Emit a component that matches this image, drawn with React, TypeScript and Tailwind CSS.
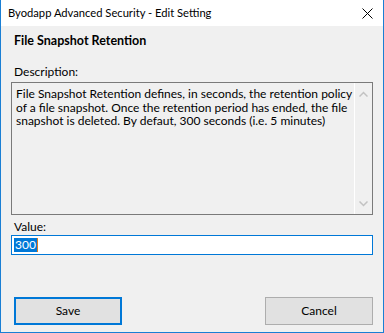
const font = { fontFamily: 'Lato, "Noto Sans", "Liberation Sans", sans-serif' };

function Chevron({ up }: { up?: boolean }) {
  return (
    <svg width="9" height="6" viewBox="0 0 9 6" className="block">
      <path
        d={up ? "M0.5 5.5 L4.5 1.5 L8.5 5.5" : "M0.5 0.5 L4.5 4.5 L8.5 0.5"}
        fill="none"
        stroke="#c2c2c2"
        strokeWidth="1.5"
      />
    </svg>
  );
}

export default function App() {
  return (
    <div
      className="w-[384px] h-[333px] flex flex-col bg-[#f0f0f0] border-x border-b border-[#1a7fd4] text-black text-[12px] overflow-hidden"
      style={font}
    >
      {/* title bar */}
      <div className="h-[26px] shrink-0 bg-white flex items-center justify-between pl-[7px] pr-[10px]">
        <span className="leading-none text-[11.2px]">Byodapp Advanced Security - Edit Setting</span>
        <svg width="11" height="11" viewBox="0 0 11 11" className="block">
          <path d="M0.5 0.5 L10.5 10.5 M10.5 0.5 L0.5 10.5" stroke="#000" strokeWidth="1" fill="none" />
        </svg>
      </div>

      <div className="flex-1 flex flex-col px-[10px]">
        <div className="pl-[3px] pt-[8px] h-[32px] font-bold leading-[14px] text-[12.5px]">File Snapshot Retention</div>

        <div className="pl-[3px] mt-[7px] h-[17px] leading-[14px]">Description:</div>

        <div className="h-[133px] border border-[#7a7a7a] flex">
          <div className="flex-1 pl-[4px] pt-[4px] leading-[13.5px] whitespace-nowrap overflow-hidden">
            <div>File Snapshot Retention defines, in seconds, the retention policy</div>
            <div>of a file snapshot. Once the retention period has ended, the file</div>
            <div>snapshot is deleted. By defaut, 300 seconds (i.e. 5 minutes)</div>
          </div>
          <div className="w-[18px] shrink-0 border-l border-white flex flex-col items-center justify-between pt-[8px] pb-[7px]">
            <Chevron up />
            <Chevron />
          </div>
        </div>

        <div className="pl-[3px] mt-[5px] h-[14px] leading-[14px]">Value:</div>

        <div className="mt-[1px] h-[20px] border border-[#0078d7] bg-white flex items-center pl-[2px]">
          <span className="bg-[#0078d7] text-white leading-[14px] px-[1px]">300</span>
          <span className="w-px h-[14px] bg-[#e07a1f]" />
        </div>

        <div className="mt-[42px] flex justify-between">
          <button className="ml-[3px] w-[108px] h-[28px] border-2 border-[#0078d7] bg-[#e1e1e1]">Save</button>
          <button className="w-[108px] h-[28px] border border-[#adadad] bg-[#e1e1e1]">Cancel</button>
        </div>
      </div>
    </div>
  );
}
